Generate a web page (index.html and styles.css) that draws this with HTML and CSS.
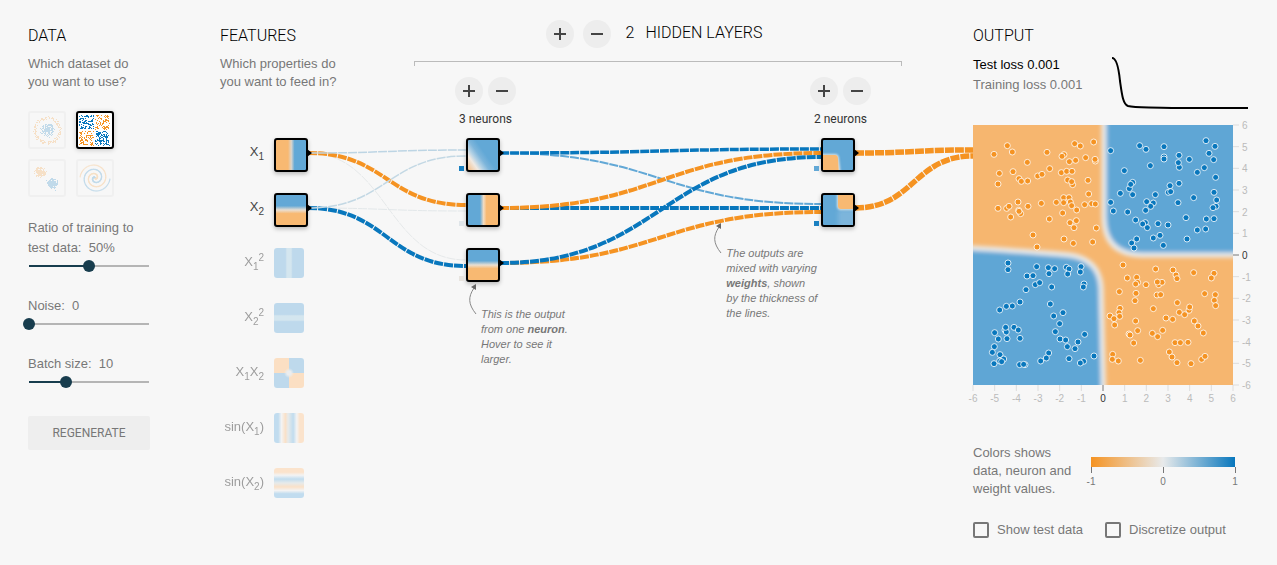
FILE: index.html
```html
<!DOCTYPE html>
<html lang="en">
<head>
<meta charset="utf-8">
<title>Neural network playground</title>
<link rel="stylesheet" href="styles.css">
</head>
<body>
<main class="page">
  <section class="data">
    <h2>Data</h2>
    <p class="hint">Which dataset do you want to use?</p>
    <div class="datasets">
      <button class="dataset" aria-label="Circle"><svg viewBox="0 0 34 34" data-set="circle"></svg></button>
      <button class="dataset selected" aria-label="Exclusive or"><svg viewBox="0 0 34 34" data-set="xor"></svg></button>
      <button class="dataset" aria-label="Gaussian"><svg viewBox="0 0 34 34" data-set="gauss"></svg></button>
      <button class="dataset" aria-label="Spiral"><svg viewBox="0 0 34 34" data-set="spiral"></svg></button>
    </div>
    <div class="sliders">
      <div class="slider">
        <label for="ratio">Ratio of training to test data:&nbsp; 50%</label>
        <input id="ratio" type="range" min="0" max="100" value="50" style="--fill:50%">
      </div>
      <div class="slider">
        <label for="noise">Noise:&nbsp; 0</label>
        <input id="noise" type="range" min="0" max="50" value="0" style="--fill:0%">
      </div>
      <div class="slider">
        <label for="batch">Batch size:&nbsp; 10</label>
        <input id="batch" type="range" min="1" max="30" value="10" style="--fill:31%">
      </div>
    </div>
    <button class="regenerate">Regenerate</button>
  </section>

  <section class="network">
    <svg class="links" aria-hidden="true"></svg>
    <div class="features">
      <h2>Features</h2>
      <p class="hint">Which properties do you want to feed in?</p>
      <ul class="feature-list">
        <li class="active"><span class="name">X<sub>1</sub></span><button class="node map-x1" id="x1" aria-label="X1"></button></li>
        <li class="active"><span class="name">X<sub>2</sub></span><button class="node map-x2" id="x2" aria-label="X2"></button></li>
        <li><span class="name">X<sub>1</sub><sup>2</sup></span><button class="node map-x1sq" aria-label="X1 squared"></button></li>
        <li><span class="name">X<sub>2</sub><sup>2</sup></span><button class="node map-x2sq" aria-label="X2 squared"></button></li>
        <li><span class="name">X<sub>1</sub>X<sub>2</sub></span><button class="node map-x1x2" aria-label="X1 times X2"></button></li>
        <li><span class="name">sin(X<sub>1</sub>)</span><button class="node map-sin1" aria-label="sin X1"></button></li>
        <li><span class="name">sin(X<sub>2</sub>)</span><button class="node map-sin2" aria-label="sin X2"></button></li>
      </ul>
    </div>

    <div class="hidden-layers">
      <div class="layers-head">
        <button class="round" aria-label="Add layer"><svg viewBox="0 0 12 12"><path d="M6 0v12M0 6h12"/></svg></button>
        <button class="round" aria-label="Remove layer"><svg viewBox="0 0 12 12"><path d="M0 6h12"/></svg></button>
        <h2><span class="count">2</span>Hidden layers</h2>
      </div>
      <div class="bracket"></div>
      <div class="layers">
        <div class="layer">
          <div class="controls">
            <button class="round" aria-label="Add neuron"><svg viewBox="0 0 12 12"><path d="M6 0v12M0 6h12"/></svg></button>
            <button class="round" aria-label="Remove neuron"><svg viewBox="0 0 12 12"><path d="M0 6h12"/></svg></button>
          </div>
          <p class="neurons">3 neurons</p>
          <div class="neuron active"><button class="node map-n1" id="n1" aria-label="Neuron 1"></button><i class="bias strong"></i></div>
          <div class="neuron active"><button class="node map-n2" id="n2" aria-label="Neuron 2"></button><i class="bias faint"></i></div>
          <div class="neuron active"><button class="node map-x2" id="n3" aria-label="Neuron 3"></button><i class="bias warm"></i>
            <div class="callout callout-neuron">
              <svg width="14" height="34" viewBox="0 0 14 34"><path class="curve" d="M8 31C0 21 0 14 6 5"/><path class="tip" d="M8 1L8 7L3 4Z"/></svg>
              <p>This is the output from one <b>neuron</b>. Hover to see it larger.</p>
            </div>
          </div>
        </div>
        <div class="layer">
          <div class="controls">
            <button class="round" aria-label="Add neuron"><svg viewBox="0 0 12 12"><path d="M6 0v12M0 6h12"/></svg></button>
            <button class="round" aria-label="Remove neuron"><svg viewBox="0 0 12 12"><path d="M0 6h12"/></svg></button>
          </div>
          <p class="neurons">2 neurons</p>
          <div class="neuron active">
            <button class="node" id="m1" aria-label="Neuron 1"><svg class="map" viewBox="0 0 30 30"><path class="halo" d="M-6 15H12Q15 15 15 19L17 36H-6Z"/><path class="spot" d="M-6 15H12Q15 15 15 19L16 36H-6Z"/></svg></button>
            <i class="bias mid"></i>
          </div>
          <div class="neuron active">
            <button class="node" id="m2" aria-label="Neuron 2"><svg class="map" viewBox="0 0 30 30"><path class="shade" d="M15 15H36V36H15Z"/><path class="halo" d="M15 -6V11Q15 14 18 14H36V-6Z"/><path class="spot" d="M15 -6V11Q15 14 18 14H36V-6Z"/></svg></button>
            <i class="bias strong"></i>
          </div>
        </div>
      </div>
      <div class="callout callout-weights">
        <svg width="14" height="34" viewBox="0 0 14 34"><path class="curve" d="M8 31C0 21 0 14 6 5"/><path class="tip" d="M8 1L8 7L3 4Z"/></svg>
        <p>The outputs are mixed with varying <b>weights</b>, shown by the thickness of the lines.</p>
      </div>
    </div>
  </section>

  <section class="output">
    <h2>Output</h2>
    <div class="metrics">
      <div class="losses">
        <p class="test">Test loss 0.001</p>
        <p>Training loss 0.001</p>
      </div>
      <svg class="loss-chart" width="137" height="52" viewBox="0 0 137 52"><path d="M0 1C5 1 7 14 8 24C10 38 11 47 16 49C23 51 35 50 60 51H136"/></svg>
    </div>
    <svg class="heatmap" width="276" height="280" viewBox="0 0 276 280">
      <defs>
        <clipPath id="frame"><rect width="260" height="260"/></clipPath>
        <filter id="soft" x="-10%" y="-10%" width="120%" height="120%"><feGaussianBlur stdDeviation="2"/></filter>
      </defs>
      <g clip-path="url(#frame)">
        <rect class="warm-area" width="260" height="260"/>
        <g filter="url(#soft)">
          <path class="cool-area" d="M131 -20V92Q131 129 168 130H290V-20Z"/>
          <path class="cool-area" d="M-20 122Q50 126 96 130Q126 134 128 162L131 290H-20Z"/>
        </g>
      </g>
      <g class="points"></g>
      <g class="axes"></g>
    </svg>
    <div class="legend">
      <p>Colors shows data, neuron and weight values.</p>
      <div class="scale">
        <div class="ramp"></div>
        <div class="marks"><span>-1</span><span>0</span><span>1</span></div>
      </div>
    </div>
    <div class="options">
      <label><input type="checkbox">Show test data</label>
      <label><input type="checkbox">Discretize output</label>
    </div>
  </section>
</main>
<script src="main.js"></script>
</body>
</html>
```
FILE: styles.css
```css
* { box-sizing: border-box; }
body {
  margin: 0;
  background: #f7f7f7;
  color: #777;
  font: 13px/18px "Liberation Sans", Arial, sans-serif;
}
h2, p, ul { margin: 0; padding: 0; }
ul { list-style: none; }
button { padding: 0; border: 0; font: inherit; color: inherit; cursor: pointer; }
h2 {
  font: 300 16px/22px Roboto, sans-serif;
  color: #000;
  text-transform: uppercase;
}
.page {
  display: grid;
  grid-template-columns: 192px minmax(720px, 1fr) 276px;
  padding: 0 28px;
}

/* Data column */
.data, .features, .output { padding-top: 25px; }
.hint { width: 124px; margin-top: 8px; }
.datasets {
  display: grid;
  grid-template-columns: 38px 38px;
  gap: 10px;
  margin-top: 20px;
}
.dataset {
  height: 38px;
  border: 2px solid #d8d8d8;
  border-radius: 3px;
  background: transparent;
  opacity: .22;
}
.dataset svg { display: block; width: 34px; height: 34px; }
.dataset.selected {
  border-color: #000;
  background: #fff;
  opacity: 1;
  box-shadow: 0 1px 5px rgba(0, 0, 0, .2);
}
.p-cool { fill: #0877bd; }
.p-warm { fill: #f59322; }
.sliders {
  display: grid;
  gap: 24px;
  margin-top: 21px;
}
.slider { width: 122px; line-height: 20px; }
.slider label { display: block; }
.slider input {
  display: block;
  appearance: none;
  width: 132px;
  height: 12px;
  margin: 2px 0 0 -5px;
  background: linear-gradient(to right, #183d4e var(--fill), #b5b5b5 var(--fill)) no-repeat 6px 5px / 120px 2px;
}
.slider input::-webkit-slider-thumb {
  appearance: none;
  width: 12px;
  height: 12px;
  border-radius: 50%;
  background: #183d4e;
}
.regenerate {
  width: 122px;
  height: 34px;
  margin-top: 28px;
  border-radius: 2px;
  background: #eee;
  font: 12px/34px Roboto, sans-serif;
  text-transform: uppercase;
}

/* Network */
.network {
  position: relative;
  display: grid;
  grid-template-columns: 194px 1fr;
  padding-right: 71px;
}
.links {
  position: absolute;
  inset: 0;
  width: 100%;
  height: 100%;
  pointer-events: none;
}
.links path { fill: none; stroke-dasharray: 9 1; }
.feature-list { margin-top: 47px; }
.feature-list li {
  display: flex;
  gap: 10px;
  height: 55px;
  opacity: .5;
}
.feature-list .active { opacity: 1; }
.name {
  width: 44px;
  line-height: 28px;
  text-align: right;
  white-space: nowrap;
  color: #444;
}
sub, sup { font-size: 10px; line-height: 0; }
.node {
  display: block;
  position: relative;
  width: 30px;
  height: 30px;
  border-radius: 3px;
}
.active .node {
  width: 34px;
  height: 34px;
  border: 2px solid #000;
  background-origin: padding-box;
  background-color: #62a8d6;
  box-shadow: 0 2px 4px rgba(0, 0, 0, .25);
}
.active .node::after {
  content: "";
  position: absolute;
  left: 31px;
  top: 9px;
  border: 4px solid transparent;
  border-left: 5px solid #000;
  border-right: 0;
}
.map { display: block; width: 30px; height: 30px; overflow: hidden; }
.spot { fill: #f8b972; }
.halo { fill: #f3e6d8; stroke: #d5e3ea; stroke-width: 2; filter: blur(1px); }
.shade { fill: #7db5db; filter: blur(2px); }
.map-x1 { background: linear-gradient(to right, #f8b972 40%, #ddd5cb 51%, #62a8d6 62%); }
.map-n2 { background: linear-gradient(to right, #62a8d6 40%, #f3dcc2 52%, #f8b972 62%); }
.map-x2 { background: linear-gradient(to bottom, #62a8d6 36%, #eadfd2 50%, #f8b972 62%); }
.map-x1sq { background: linear-gradient(to right, #87bde3 38%, #b3d6e8 43%, #b3d6e8 57%, #87bde3 62%); }
.map-x2sq { background: linear-gradient(to bottom, #87bde3 38%, #b3d6e8 43%, #b3d6e8 57%, #87bde3 62%); }
.map-x1x2 {
  background:
    radial-gradient(circle, #e0e4e6 2px, transparent 5px),
    conic-gradient(#87bde3 25%, #ffc990 0 50%, #87bde3 0 75%, #ffc990 0);
}
.map-sin1 { background: linear-gradient(to right, #8cc3e8 14%, #f1f1f1 25%, #fdcc9b 38%, #d8dfdf 47%, #8cc3e8 64%, #f1f1f1 76%, #ffd0a2 86%); }
.map-sin2 { background: linear-gradient(to bottom, #ffd0a2 14%, #f1f1f1 24%, #8cc3e8 37%, #d8dfdf 50%, #fdcc9b 63%, #f1f1f1 75%, #8cc3e8 86%); }
.map-n1 { background: linear-gradient(55deg, #f3c699 4%, #f0e9e2 20%, #b5d2e5 30%, #7db5db 42%, #62a8d6 56%); }
.hidden-layers { position: relative; }
.layers-head {
  display: flex;
  align-items: center;
  justify-content: center;
  gap: 9px;
  padding-right: 8px;
  margin-top: 20px;
}
.layers-head h2 { margin: 0 0 2px 6px; }
.count { margin-right: 11px; }
.round {
  display: grid;
  place-items: center;
  width: 28px;
  height: 28px;
  border-radius: 50%;
  background: #ededed;
}
.round svg { width: 12px; height: 12px; }
.round path { stroke: #444; stroke-width: 2; }
.bracket {
  height: 5px;
  margin-top: 13px;
  border: 1px solid #bbb;
  border-bottom: 0;
}
.layers {
  display: flex;
  justify-content: space-between;
  padding: 11px 31px 0 41px;
}
.layer { width: 61px; }
.controls { display: flex; gap: 5px; }
.neurons {
  margin: 6px 0 11px;
  font: 12px/16px Roboto, sans-serif;
  color: #333;
  text-align: center;
}
.neuron {
  position: relative;
  width: 34px;
  height: 55px;
  margin-left: 11px;
}
.bias {
  position: absolute;
  left: -7px;
  top: 28px;
  width: 5px;
  height: 5px;
}
.strong { background: #1a80c1; }
.mid { background: #62a8d6; }
.faint { background: #dfe5e9; }
.warm { background: #e8e4df; }
.callout {
  position: absolute;
  font-size: 11px;
  font-style: italic;
  line-height: 15px;
}
.callout svg { position: absolute; left: -13px; top: -24px; }
.curve { fill: none; stroke: #888; }
.tip { fill: #666; }
.callout-neuron { left: 15px; top: 59px; width: 92px; }
.callout-weights { left: 64%; top: 246px; width: 93px; }

/* Output */
.metrics {
  display: flex;
  justify-content: space-between;
  margin-top: 8px;
}
.losses { line-height: 20px; }
.test { color: #000; }
.loss-chart { margin-top: 2px; }
.loss-chart path { fill: none; stroke: #000; stroke-width: 2; }
.heatmap { display: block; margin-top: 16px; overflow: visible; }
.warm-area { fill: #f6b66f; }
.cool-area { fill: #5fa6d5; stroke: #e8eaeb; stroke-width: 5; }
.points circle { stroke: #fff; stroke-opacity: .8; stroke-width: 1; }
.axes text { font-size: 10px; fill: #bbb; }
.axes line { stroke: #ddd; }
.axes .zero line { stroke: #777; }
.axes .zero text { fill: #333; }
.legend {
  display: flex;
  margin-top: 39px;
}
.legend p { width: 118px; padding-right: 16px; }
.scale { width: 144px; margin-top: 13px; }
.ramp {
  height: 10px;
  background: linear-gradient(to right, #f59322, #e8eaeb, #0877bd);
}
.marks {
  display: flex;
  justify-content: space-between;
  margin: 0 -10px;
  font-size: 10px;
}
.marks span {
  width: 20px;
  text-align: center;
  background: linear-gradient(#777, #777) no-repeat 50% 0 / 1px 6px;
  padding-top: 6px;
}
.options {
  display: flex;
  gap: 22px;
  margin-top: 23px;
}
.options label { display: flex; align-items: center; gap: 8px; }
.options input {
  appearance: none;
  width: 16px;
  height: 16px;
  margin: 0;
  border: 2px solid #777;
  border-radius: 2px;
}
```
FILE: main.js
```js
const NS = "http://www.w3.org/2000/svg";
function add(parent, tag, attrs, text) {
  const el = document.createElementNS(NS, tag);
  for (const key in attrs) el.setAttribute(key, attrs[key]);
  if (text !== undefined) el.textContent = text;
  parent.appendChild(el);
  return el;
}

/* Samples are stored on a third-of-a-pixel grid, one group per quadrant. */
const groups = [
  { cls: "p-warm", dx: -8, dy: -5, pts: "87,103 127,77 142,96 246,97 329,71 346,78 386,66 297,104 291,109 362,113 391,123 390,118 313,125 332,121 187,127 103,160 144,155 254,146 289,158 305,154 321,154 218,168 231,163 162,176 169,184 188,183 99,192 308,180 323,194 320,185 369,181 371,222 296,233 312,233 316,246 296,248 274,247 320,257 335,270 359,254 380,251 391,252 99,265 125,265 132,259 159,246 189,259 229,250 167,281 161,271 162,274 137,291 293,279 253,297 315,308 334,302 327,323 394,324 204,345 297,357 325,370 383,366 216,381" },
  { cls: "p-cool", dx: 127, dy: -5, pts: "32,92 119,77 138,88 192,80 192,111 192,117 237,106 268,118 318,62 345,79 327,100 341,119 151,137 238,142 235,128 313,143 292,157 73,152 347,172 98,187 88,206 92,193 210,197 237,190 205,217 212,215 61,220 98,224 166,224 281,233 342,217 350,240 32,247 140,245 160,249 152,259 234,248 348,259 339,263 40,273 137,271 83,276 107,300 258,293 319,297 342,296 136,308 128,312 142,323 174,311 204,315 292,330 317,327 180,346 160,354 110,357 95,369 102,384 261,357 190,376" },
  { cls: "p-cool", dx: -8, dy: 125, pts: "129,39 129,59 215,50 250,53 269,56 252,71 304,52 312,57 308,72 348,50 346,66 186,78 204,77 211,104 224,98 260,111 183,119 357,102 355,111 165,156 124,169 142,168 104,180 256,162 266,198 294,188 284,221 89,248 120,240 124,246 122,232 147,232 160,240 271,245 359,253 100,267 126,266 165,265 285,267 302,270 339,276 88,290 82,307 307,290 330,296 105,314 116,327 104,333 110,335 87,341 251,309 244,324 227,333 312,326 387,318 356,334 346,339 164,344 180,344 176,343" },
  { cls: "p-warm", dx: 107, dy: 125, pts: "129,45 227,57 279,60 288,75 291,86 341,68 402,70 394,84 142,84 170,82 173,97 167,102 198,104 236,104 246,97 232,96 118,125 168,130 231,135 242,134 374,131 406,134 403,151 407,167 165,152 292,158 220,176 120,175 117,188 90,198 102,206 119,199 104,225 327,181 329,171 298,187 314,194 258,204 278,208 343,213 354,228 370,249 167,213 173,242 147,252 150,255 217,250 233,260 248,241 161,279 285,278 301,278 324,277 98,313 97,328 115,333 181,331 268,306 276,321 291,338 333,341 365,328 375,319" }
];

const points = document.querySelector(".points");
const samples = [];
for (const g of groups) {
  for (const pair of g.pts.split(" ")) {
    const [a, b] = pair.split(",").map(Number);
    const s = { x: a / 3 + g.dx, y: b / 3 + g.dy, cls: g.cls };
    samples.push(s);
    add(points, "circle", { class: s.cls, cx: s.x, cy: s.y, r: 3 });
  }
}

const axes = document.querySelector(".axes");
for (let v = -6; v <= 6; v++) {
  const at = (v + 6) * 260 / 12;
  const cls = v === 0 ? "zero" : "";
  const bottom = add(axes, "g", { class: cls });
  add(bottom, "line", { x1: at, x2: at, y1: 260, y2: 266 });
  add(bottom, "text", { x: at, y: 277, "text-anchor": "middle" }, v);
  const right = add(axes, "g", { class: cls });
  add(right, "line", { x1: 260, x2: 266, y1: 260 - at, y2: 260 - at });
  add(right, "text", { x: 269, y: 264 - at }, v);
}

/* Dataset thumbnails */
let seed = 7;
function rnd() {
  seed = (seed * 16807) % 2147483647;
  return seed / 2147483647;
}
function normal() { return rnd() + rnd() + rnd() + rnd() - 2; }
function dot(svg, x, y, cls) {
  add(svg, "rect", { x: Math.round(x), y: Math.round(y), width: 1, height: 1, class: cls });
}
const thumbs = {
  circle(svg) {
    for (let i = 0; i < 170; i++) {
      const t = rnd() * 6.28, u = rnd() * 6.28, r = rnd() * 7, q = 11 + rnd() * 3;
      dot(svg, 17 + r * Math.cos(t), 17 + r * Math.sin(t), "p-cool");
      dot(svg, 17 + q * Math.cos(u), 17 + q * Math.sin(u), "p-warm");
    }
  },
  xor(svg) {
    for (let i = 0; i < 460; i++) {
      const x = rnd() * 2 - 1, y = rnd() * 2 - 1;
      if (Math.abs(x) > 0.05 && Math.abs(y) > 0.05) {
        dot(svg, 16 + x * 15, 17 + y * 15, x * y > 0 ? "p-cool" : "p-warm");
      }
    }
  },
  gauss(svg) {
    for (let i = 0; i < 190; i++) {
      dot(svg, 10 + normal() * 4, 11 + normal() * 4, "p-warm");
      dot(svg, 22 + normal() * 4, 22 + normal() * 4, "p-cool");
    }
  },
  spiral(svg) {
    for (let i = 4; i < 140; i++) {
      const r = i / 140 * 15, t = 1.75 * i / 140 * 6.28;
      for (const [off, cls] of [[0, "p-warm"], [Math.PI, "p-cool"]]) {
        add(svg, "circle", { cx: 17 + r * Math.sin(t + off), cy: 17 + r * Math.cos(t + off), r: 0.7, class: cls });
      }
    }
  }
};
document.querySelectorAll("[data-set]").forEach(svg => thumbs[svg.dataset.set](svg));

/* Weights between nodes: source, target, input index, input count, colour, width */
const links = [
  ["x1", "n3", 0, 2, "#e6e9ea", 1], ["x2", "n2", 1, 2, "#e3e8ea", 1],
  ["x1", "n2", 0, 2, "#f59322", 4], ["x2", "n3", 1, 2, "#0877bd", 4],
  ["x1", "n1", 0, 2, "#bdd5e4", 1.5], ["x2", "n1", 1, 2, "#c3d8e4", 1.5],
  ["n1", "m2", 0, 3, "#62a8d6", 2], ["n1", "m1", 0, 3, "#0877bd", 3.5],
  ["n2", "m2", 1, 3, "#0877bd", 4], ["n2", "m1", 1, 3, "#f59322", 4],
  ["n3", "m2", 2, 3, "#f59322", 4], ["n3", "m1", 2, 3, "#0877bd", 4],
  ["m1", null, 0, 2, "#f59322", 5.5], ["m2", null, 1, 2, "#f59322", 5.5]
];
const canvas = document.querySelector(".links");
function drawLinks() {
  canvas.replaceChildren();
  const base = canvas.getBoundingClientRect();
  const box = id => document.getElementById(id).getBoundingClientRect();
  for (const [from, to, index, count, color, width] of links) {
    const a = box(from);
    const b = to ? box(to) : { left: base.right, top: box("m1").top };
    const x1 = a.right - base.left, y1 = a.top - base.top + 15;
    const x2 = b.left - base.left;
    const y2 = b.top - base.top + 15 + (index - (count - 1) / 2) * 12 / count;
    const mid = (x1 + x2) / 2;
    add(canvas, "path", { d: `M${x1} ${y1}C${mid} ${y1} ${mid} ${y2} ${x2} ${y2}`, stroke: color, "stroke-width": width });
  }
}
drawLinks();
addEventListener("resize", drawLinks);
```
